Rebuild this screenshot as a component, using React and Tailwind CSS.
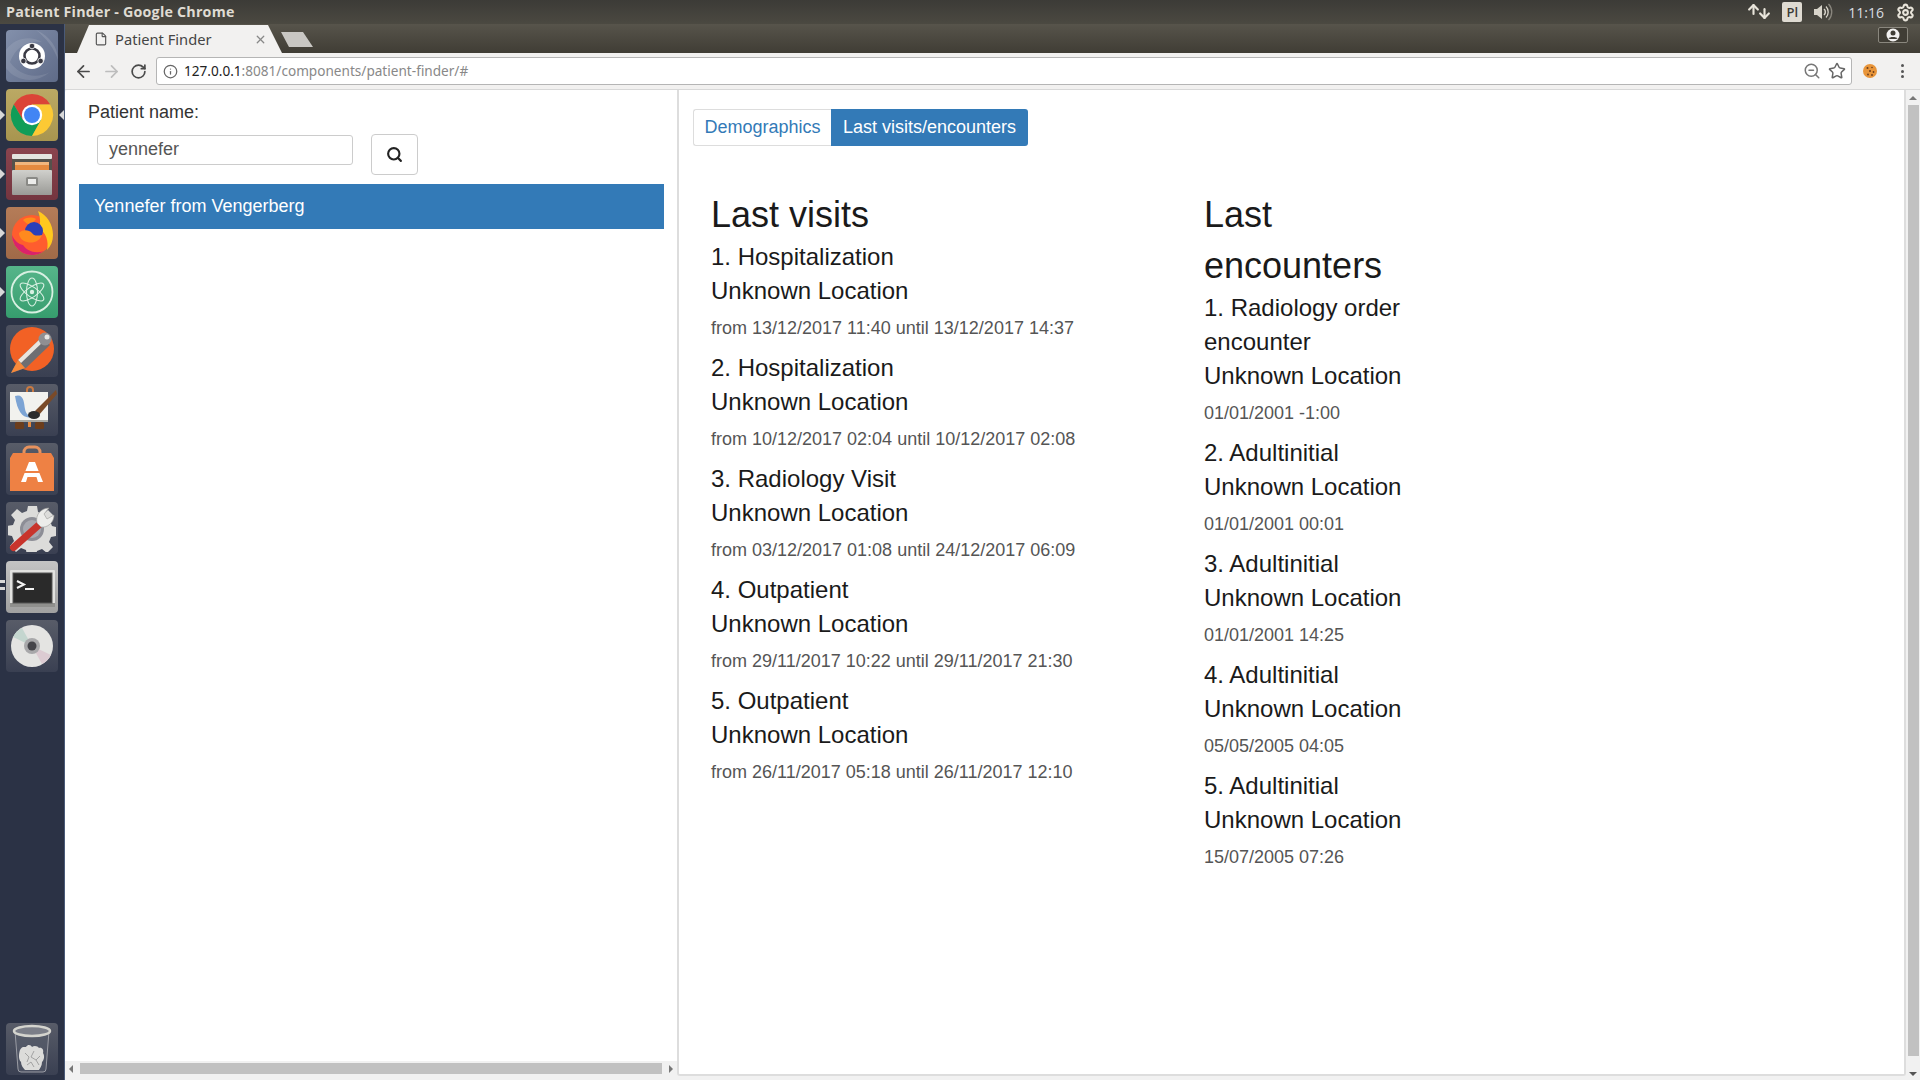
import { Search, ArrowLeft, ArrowRight, RotateCw, Info, ZoomOut, Star, X, File, ArrowUp, ArrowDown, Settings } from "lucide-react";

const visits = [
  { name: "1. Hospitalization", time: "from 13/12/2017 11:40 until 13/12/2017 14:37" },
  { name: "2. Hospitalization", time: "from 10/12/2017 02:04 until 10/12/2017 02:08" },
  { name: "3. Radiology Visit", time: "from 03/12/2017 01:08 until 24/12/2017 06:09" },
  { name: "4. Outpatient", time: "from 29/11/2017 10:22 until 29/11/2017 21:30" },
  { name: "5. Outpatient", time: "from 26/11/2017 05:18 until 26/11/2017 12:10" },
];

const encounters = [
  { name: "1. Radiology order encounter", time: "01/01/2001 -1:00" },
  { name: "2. Adultinitial", time: "01/01/2001 00:01" },
  { name: "3. Adultinitial", time: "01/01/2001 14:25" },
  { name: "4. Adultinitial", time: "05/05/2005 04:05" },
  { name: "5. Adultinitial", time: "15/07/2005 07:26" },
];

const Pip = ({ className }) => (
  <div className={`absolute left-0 w-0 h-0 border-y-[5px] border-y-transparent border-l-[5px] border-l-[#d8d8d8] ${className}`} />
);

const Tile = ({ bg, children, pip, pipR, pipDouble }) => (
  <div className="relative w-[64px] h-[52px] shrink-0 flex justify-center">
    {pip && <Pip className="top-[21px]" />}
    {pipDouble && <div className="absolute left-0 top-[19px] w-[5px] h-[3px] bg-[#d8d8d8]" />}
    {pipDouble && <div className="absolute left-0 top-[26px] w-[5px] h-[3px] bg-[#d8d8d8]" />}
    {pipR && <div className="absolute right-0 top-[21px] w-0 h-0 border-y-[5px] border-y-transparent border-r-[5px] border-r-[#d8d8d8]" />}
    <div className={`relative w-[52px] h-[52px] rounded-[4px] overflow-hidden flex items-center justify-center ${bg}`}>{children}</div>
  </div>
);

const UbuntuIcon = () => (
  <svg width="52" height="52" viewBox="0 0 52 52">
    <path d="M30 0c14 6 22 18 22 30-4-12-12-22-22-30z" fill="#ffffff" fillOpacity="0.12" />
    <path d="M0 20c10-14 26-14 36-8-14-2-26 4-32 20 8 12 24 18 40 10-14 12-34 10-44-4z" fill="#ffffff" fillOpacity="0.1" />
    <circle cx="26" cy="26" r="13" fill="#fff" />
    <circle cx="26" cy="26" r="7.5" fill="none" stroke="#3a3a44" strokeWidth="2.6" />
    <circle cx="26" cy="16" r="2.8" fill="#3a3a44" stroke="#fff" strokeWidth="0.8" />
    <circle cx="17.4" cy="31" r="2.8" fill="#3a3a44" stroke="#fff" strokeWidth="0.8" />
    <circle cx="34.6" cy="31" r="2.8" fill="#3a3a44" stroke="#fff" strokeWidth="0.8" />
  </svg>
);

const ChromeIcon = () => (
  <svg width="46" height="46" viewBox="0 0 46 46">
    <path d="M41.2 12.5A21 21 0 0 0 4.8 12.5L14 28 23 12.5z" fill="#db4437" />
    <path d="M4.8 12.5A21 21 0 0 0 23 44L32 28H14z" fill="#0f9d58" />
    <path d="M41.2 12.5A21 21 0 0 1 23 44L32 28 23 12.5z" fill="#fcc934" />
    <circle cx="23" cy="23" r="10.2" fill="#fff" />
    <circle cx="23" cy="23" r="8" fill="#4285f4" />
  </svg>
);

const FilesIcon = () => (
  <svg width="44" height="46" viewBox="0 0 44 46">
    <defs>
      <linearGradient id="cab" x1="0" y1="0" x2="0" y2="1">
        <stop offset="0" stopColor="#d0d0cc" />
        <stop offset="1" stopColor="#9a9a96" />
      </linearGradient>
    </defs>
    <rect x="2" y="3" width="40" height="5" rx="1" fill="#e4e4e0" />
    <rect x="2" y="8" width="40" height="12" fill="#55524c" />
    <rect x="5" y="11" width="34" height="3" fill="#f1b67e" />
    <rect x="5" y="14" width="34" height="5" fill="#e58a3f" />
    <rect x="2" y="19" width="40" height="25" rx="1" fill="url(#cab)" />
    <rect x="16" y="26" width="12" height="9" rx="1.5" fill="#8a8a86" />
    <rect x="18" y="28" width="8" height="5" fill="#ececea" />
  </svg>
);

const FirefoxIcon = () => (
  <svg width="46" height="46" viewBox="0 0 46 46">
    <circle cx="23" cy="25" r="20" fill="#ff5d2e" />
    <path d="M3 25a20 20 0 0 0 32 16c-9 3-17 0-21-6-5-1-9-5-11-10z" fill="#d9236b" />
    <path d="M29 1c9 4 15 13 15 24 0 6-2 11-6 15 2-9-1-17-8-22 2-5 1-12-1-17z" fill="#ffc81e" />
    <path d="M14 10c4-3 9-3 13-1-2 3-5 4-6 6-3-1-5-3-7-5z" fill="#ff8c1a" />
    <circle cx="25" cy="21" r="9" fill="#2b3fb8" />
    <path d="M10 23c4-4 10-3 13 0 2 3 5 3 10 2-2 6-9 9-15 7-5-1-8-5-8-9z" fill="#ff8a1e" />
  </svg>
);

const AtomIcon = () => (
  <svg width="46" height="46" viewBox="0 0 46 46" fill="none" stroke="#d8f0e2" strokeWidth="1.1">
    <circle cx="23" cy="23" r="20.5" strokeWidth="1.8" />
    <ellipse cx="23" cy="23" rx="14" ry="5" transform="rotate(35 23 23)" />
    <ellipse cx="23" cy="23" rx="14" ry="5" transform="rotate(-35 23 23)" />
    <ellipse cx="23" cy="23" rx="14" ry="5.5" transform="rotate(90 23 23)" />
    <circle cx="23" cy="23" r="2.2" fill="#d8f0e2" stroke="none" />
  </svg>
);

const PencilIcon = () => (
  <svg width="52" height="52" viewBox="0 0 52 52">
    <circle cx="26" cy="24" r="22" fill="#f26125" />
    <path d="M5 48 12 35 36 12 44 20 20 43z" fill="#6e6e72" />
    <path d="M12 35 36 12 39 15 15 38z" fill="#e9e4de" />
    <path d="M5 48 12 35 19 43z" fill="#f7893a" />
    <circle cx="39" cy="14" r="6.5" fill="#8f8f92" />
    <circle cx="41" cy="12" r="2.5" fill="#e6e6e4" />
  </svg>
);

const PaintIcon = () => (
  <svg width="50" height="48" viewBox="0 0 50 48">
    <path d="M20 6V4a3 3 0 0 1 6 0v2" fill="none" stroke="#c97a42" strokeWidth="2" />
    <rect x="3" y="6" width="38" height="30" fill="#f2f2ee" />
    <rect x="3" y="34" width="38" height="2" fill="#a8a8a2" />
    <path d="M8 10c9-3 9 7 10 13 1 6 5 8 9 7-8 4-16 0-19-20z" fill="#7ca4d4" />
    <path d="M49 4 28 25l4 4L50 8z" fill="#7a4a28" />
    <ellipse cx="27" cy="29" rx="6" ry="4" fill="#2b2b2b" />
    <rect x="8" y="36" width="9" height="7" rx="1.5" fill="#6b3d1c" />
    <rect x="21" y="36" width="3" height="5" fill="#e58a3f" />
    <rect x="28" y="36" width="9" height="7" rx="1.5" fill="#6b3d1c" />
  </svg>
);

const StoreIcon = () => (
  <svg width="44" height="48" viewBox="0 0 44 48">
    <path d="M14 12V7a5 5 0 0 1 5-5h6a5 5 0 0 1 5 5v5" fill="none" stroke="#e7925e" strokeWidth="3" />
    <path d="M3 8h38l3 5v33H0V13z" fill="#ee8144" />
    <path d="M19 17h6l8 20h-5l-1.500-5h-9L16 37h-5z" fill="#fff" />
    <rect x="10" y="26" width="24" height="2" fill="#ee8144" />
  </svg>
);

const ToolsIcon = () => (
  <svg width="48" height="48" viewBox="0 0 48 48">
    <path d="M20 2h9l1 6 5 2 5-4 6 6-4 5 2 5 4 1v9l-5 1-2 5 4 5-6 6-5-4-5 2-1 5h-9l-1-6-5-2-5 4-6-6 4-5-2-5-5-1v-9l6-1 2-5-4-5 6-6 5 4 5-2z" fill="#dcdcda" />
    <circle cx="24" cy="25" r="12" fill="#8d8e96" />
    <circle cx="24" cy="25" r="9" fill="#a8a9b0" />
    <path d="M3 41 30 17l5 5L8 46a3.500 3.500 0 0 1-5-5z" fill="#c8342c" />
    <path d="M29 19c-2-8 4-15 12-15l-5 6 3 5 7-4c0 8-7 13-13 12z" fill="#ececea" stroke="#9a9a98" strokeWidth="0.6" />
  </svg>
);

const TerminalIcon = () => (
  <svg width="52" height="52" viewBox="0 0 52 52">
    <rect x="4" y="9" width="45" height="37" rx="1" fill="#e2e2e0" />
    <rect x="4" y="42" width="45" height="4" fill="#8f8f8d" />
    <rect x="7" y="12" width="39" height="30" fill="#2a2a2a" stroke="#555" />
    <path d="M11 20l7 3.500-7 3.500" fill="none" stroke="#f2f2f2" strokeWidth="2" />
    <rect x="19" y="27" width="9" height="2" fill="#f2f2f2" />
  </svg>
);

const DiscIcon = () => (
  <svg width="44" height="44" viewBox="0 0 44 44">
    <circle cx="22" cy="22" r="21" fill="#e4e4e2" />
    <path d="M22 22 3 13a21 21 0 0 1 9-9z" fill="#c4d6cf" />
    <path d="M22 22 41 31a21 21 0 0 1-9 9z" fill="#dccbd2" />
    <circle cx="22" cy="22" r="8" fill="#a8a8aa" />
    <circle cx="22" cy="22" r="4.500" fill="#45454a" />
  </svg>
);

const TrashIcon = () => (
  <svg width="44" height="52" viewBox="0 0 44 52">
    <path d="M5 8l3 38a3 3 0 0 0 3 3h22a3 3 0 0 0 3-3l3-38z" fill="#5a5f6e" fillOpacity="0.55" stroke="#9a9ca4" />
    <path d="M10 27c2-4 4-3 6-3 2-3 5-2 6 0 2-2 6-1 7 1 3-1 5 2 4 5 2 3 1 7-1 9 0 4-2 6-3 8H15c-2-2-4-5-4-8-3-3-2-9-1-12z" fill="#dcdcda" />
    <path d="M15 30l4 4-2 5M24 28l-3 6 5 3M30 33l-4 4 3 5M17 42l4-3 3 5" fill="none" stroke="#9c9c9c" strokeWidth="0.9" />
    <ellipse cx="22" cy="8" rx="18" ry="5" fill="#7b7e88" stroke="#d4d4ce" strokeWidth="2.5" />
  </svg>
);

const CookieIcon = () => (
  <svg width="16" height="16" viewBox="0 0 16 16">
    <circle cx="8" cy="8" r="7" fill="#e8953a" />
    <circle cx="5.500" cy="5" r="1" fill="#6b3d1c" />
    <circle cx="10" cy="4.500" r="0.800" fill="#6b3d1c" />
    <circle cx="8" cy="8" r="1" fill="#6b3d1c" />
    <circle cx="11.500" cy="9" r="0.900" fill="#6b3d1c" />
    <circle cx="6" cy="11.500" r="0.900" fill="#6b3d1c" />
    <circle cx="10" cy="12" r="0.900" fill="#6b3d1c" />
  </svg>
);

const SpeakerIcon = () => (
  <svg width="21" height="20" viewBox="0 0 21 20" fill="none">
    <path d="M1 7h3l5-4v14l-5-4H1z" fill="#d8d4ca" />
    <path d="M11 7a4 4 0 0 1 0 6" stroke="#d8d4ca" strokeWidth="1.500" />
    <path d="M13 4.500a8 8 0 0 1 0 11" stroke="#d8d4ca" strokeWidth="1.300" />
    <path d="M15.500 2a11.500 11.500 0 0 1 0 16" stroke="#8a877e" strokeWidth="1.300" />
  </svg>
);

const ProfileIcon = () => (
  <svg width="14" height="14" viewBox="0 0 14 14">
    <circle cx="7" cy="7" r="6.500" fill="#f2f1f0" />
    <circle cx="7" cy="5" r="2.500" fill="#403d35" />
    <path d="M2.500 10.500c1-2 8-2 9 0-1 .8-8 .8-9 0z" fill="#403d35" />
  </svg>
);

const Entry = ({ item }) => (
  <div className="mb-[10px]">
    <div className="text-[24px] leading-[34px] text-[#1a1a1a]">{item.name}</div>
    <div className="text-[24px] leading-[34px] text-[#1a1a1a]">Unknown Location</div>
    <div className="mt-[8px] text-[18px] leading-[25px] text-[#555]">{item.time}</div>
  </div>
);

export default function App() {
  return (
    <div className="w-[1920px] h-[1080px] overflow-hidden flex flex-col bg-[#2b3245] font-['Liberation_Sans',sans-serif]">
      {/* ubuntu top panel */}
      <div className="h-[24px] shrink-0 flex items-center justify-between bg-gradient-to-b from-[#3c3b37] to-[#4b4941] pl-[6px] pr-[5px]">
        <span className="text-[14.3px] font-bold text-[#dfdbd2] font-['Open_Sans',sans-serif] tracking-[0.2px]">Patient Finder - Google Chrome</span>
        <div className="flex items-center text-[#e8e4da]">
          <div className="flex mr-[10px] -space-x-[4px]">
            <ArrowUp size={15} strokeWidth={3.4} className="-mt-[2px]" />
            <ArrowDown size={15} strokeWidth={3.4} className="mt-[2px]" />
          </div>
          <div className="w-[20px] h-[20px] mr-[11px] rounded-[2px] bg-[#dfdbd2] text-[#3c3b37] text-[13px] leading-[20px] text-center font-['Open_Sans',sans-serif] font-semibold">Pl</div>
          <div className="mr-[14px]"><SpeakerIcon /></div>
          <span className="text-[14px] mr-[12px] font-['Open_Sans',sans-serif] text-[#d8dde0]">11:16</span>
          <Settings size={19} strokeWidth={2.6} />
        </div>
      </div>

      <div className="flex-1 flex min-h-0">
        {/* launcher */}
        <div className="w-[65px] shrink-0 flex flex-col justify-between pt-[6px] pb-[5px] bg-[#2b3245] border-r border-[#4a5a78]">
          <div className="flex flex-col gap-[7px]">
            <Tile bg="bg-gradient-to-br from-[#8390ab] to-[#5f6b88]"><UbuntuIcon /></Tile>
            <Tile bg="bg-gradient-to-b from-[#bba964] to-[#a8954f]" pip pipR><ChromeIcon /></Tile>
            <Tile bg="bg-gradient-to-b from-[#8a444e] to-[#74353f]" pip><FilesIcon /></Tile>
            <Tile bg="bg-gradient-to-b from-[#b57c58] to-[#a06a48]" pip><FirefoxIcon /></Tile>
            <Tile bg="bg-gradient-to-b from-[#56b58a] to-[#369d6e]" pip><AtomIcon /></Tile>
            <Tile bg="bg-gradient-to-b from-[#4e5260] to-[#3a4052]"><PencilIcon /></Tile>
            <Tile bg="bg-gradient-to-b from-[#585c68] to-[#3a4052]"><PaintIcon /></Tile>
            <Tile bg="bg-gradient-to-b from-[#585c68] to-[#3a4052]"><StoreIcon /></Tile>
            <Tile bg="bg-gradient-to-b from-[#585c68] to-[#3a4052]"><ToolsIcon /></Tile>
            <Tile bg="bg-gradient-to-b from-[#c4c4c4] to-[#a0a0a0]" pipDouble><TerminalIcon /></Tile>
            <Tile bg="bg-gradient-to-b from-[#585c68] to-[#3a4052]"><DiscIcon /></Tile>
          </div>
          <Tile bg="bg-gradient-to-b from-[#585c68] to-[#3a4052]"><TrashIcon /></Tile>
        </div>

        {/* chrome window */}
        <div className="flex-1 min-w-0 flex flex-col bg-[#f2f1f0]">
          <div className="h-[29px] shrink-0 flex items-end justify-between bg-gradient-to-b from-[#57544b] to-[#403d35]">
            <div className="flex items-end pl-[12px]">
              <div className="w-[205px] h-[28px] bg-[#f2f1f0] [clip-path:polygon(12px_0,191px_0,205px_100%,0_100%)] flex items-center pl-[17px] pr-[15px] text-[14.7px] text-[#454545] font-['Noto_Sans',sans-serif]">
                <File size={14} className="mr-[7px] text-[#555]" />
                <span className="flex-1">Patient Finder</span>
                <X size={13} strokeWidth={2.4} className="text-[#888]" />
              </div>
              <div className="-ml-[1px] mb-[6px] w-[32px] h-[15px] bg-[#c9c7c3] [clip-path:polygon(0_0,22px_0,32px_100%,8px_100%)]" />
            </div>
            <div className="mb-[10px] mr-[12px] w-[30px] h-[16px] rounded-[2px] border border-[#8a877e] bg-[#403d35] flex items-center justify-center">
              <ProfileIcon />
            </div>
          </div>

          <div className="h-[37px] shrink-0 flex items-center bg-[#f2f1f0] border-b border-[#d8d8d8] pl-[9px] pr-[16px]">
            <ArrowLeft size={19} strokeWidth={2.2} className="text-[#4a4a4a] mr-[9px]" />
            <ArrowRight size={19} strokeWidth={2.2} className="text-[#bdbdbd] mr-[9px]" />
            <RotateCw size={17} strokeWidth={2.4} className="text-[#4a4a4a] mr-[9px]" />
            <div className="flex-1 h-[28px] flex items-center rounded-[3px] border border-[#b5b5b5] bg-white pl-[6px] pr-[5px]">
              <Info size={15} className="text-[#666] mr-[6px]" />
              <span className="flex-1 text-[13.6px] text-[#222] font-['Noto_Sans',sans-serif]">127.0.0.1<span className="text-[#888]">:8081/components/patient-finder/#</span></span>
              <ZoomOut size={18} className="text-[#777] mr-[7px]" />
              <Star size={18} strokeWidth={2} className="text-[#666]" />
            </div>
            <div className="ml-[10px] mr-[23px]"><CookieIcon /></div>
            <div className="flex flex-col gap-[2.5px]">
              <div className="w-[3px] h-[3px] rounded-full bg-[#555]" />
              <div className="w-[3px] h-[3px] rounded-full bg-[#555]" />
              <div className="w-[3px] h-[3px] rounded-full bg-[#555]" />
            </div>
          </div>

          {/* page */}
          <div className="flex-1 min-h-0 flex bg-[#f1f1f1]">
            <div className="flex-1 min-w-0 flex">
              {/* left panel */}
              <div className="w-[612px] shrink-0 flex flex-col bg-white rounded-tl-[3px]">
                <div className="flex-1 min-h-0 pl-[14px]">
                  <div className="pl-[9px] pt-[11px] text-[18px] leading-[22px] text-[#333]">Patient name:</div>
                  <div className="flex items-start h-[41px] pl-[18px] mt-[11px]">
                    <div className="w-[256px] h-[30px] mt-[1px] rounded-[3px] border border-[#ccc] pl-[11px] text-[18px] leading-[27px] text-[#555]">yennefer</div>
                    <div className="ml-[18px] w-[47px] h-[41px] rounded-[4px] border border-[#ccc] flex items-center justify-center text-[#222]">
                      <Search size={17} strokeWidth={3} />
                    </div>
                  </div>
                  <div className="mt-[9px] w-[585px] h-[45px] bg-[#337ab7] pl-[15px] text-[18px] leading-[45px] text-white">Yennefer from Vengerberg</div>
                </div>
                <div className="h-[19px] shrink-0 flex items-start bg-[#f1f1f1] px-[4px] pt-[2px]">
                  <div className="mt-[2px] w-0 h-0 border-y-[4px] border-y-transparent border-r-[4px] border-r-[#777]" />
                  <div className="flex-1 mx-[7px] h-[11px] bg-[#c1c1c1]" />
                  <div className="mt-[2px] w-0 h-0 border-y-[4px] border-y-transparent border-l-[4px] border-l-[#777]" />
                </div>
              </div>

              {/* right panel */}
              <div className="flex-1 min-w-0 mb-[4px] bg-white border-l-[2px] border-r-[2px] border-b-[2px] border-[#ddd] rounded-b-[3px] pl-[14px] pt-[19px]">
                <div className="flex h-[37px] text-[18px]">
                  <div className="w-[138px] rounded-l-[3px] border border-[#ddd] border-r-0 text-[#337ab7] text-center leading-[34px]">Demographics</div>
                  <div className="w-[197px] rounded-r-[3px] bg-[#337ab7] text-white text-center leading-[36px]">Last visits/encounters</div>
                </div>
                <div className="flex pl-[18px] pt-[43px]">
                  <div className="w-[493px] shrink-0">
                    <h3 className="text-[36px] leading-[51px] text-[#1a1a1a]">Last visits</h3>
                    {visits.map((v) => <Entry key={v.name} item={v} />)}
                  </div>
                  <div className="w-[250px] shrink-0">
                    <h3 className="text-[36px] leading-[51px] text-[#1a1a1a]">Last encounters</h3>
                    {encounters.map((v) => <Entry key={v.name} item={v} />)}
                  </div>
                </div>
              </div>
            </div>

            {/* page scrollbar */}
            <div className="w-[14px] shrink-0 flex flex-col items-center bg-[#f1f1f1] pt-[6px] pb-[4px]">
              <div className="w-0 h-0 border-x-[4px] border-x-transparent border-b-[4px] border-b-[#777]" />
              <div className="flex-1 w-[11px] mt-[5px] mb-[16px] bg-[#c1c1c1]" />
              <div className="w-0 h-0 border-x-[4px] border-x-transparent border-t-[4px] border-t-[#555]" />
            </div>
          </div>
        </div>
      </div>
    </div>
  );
}
